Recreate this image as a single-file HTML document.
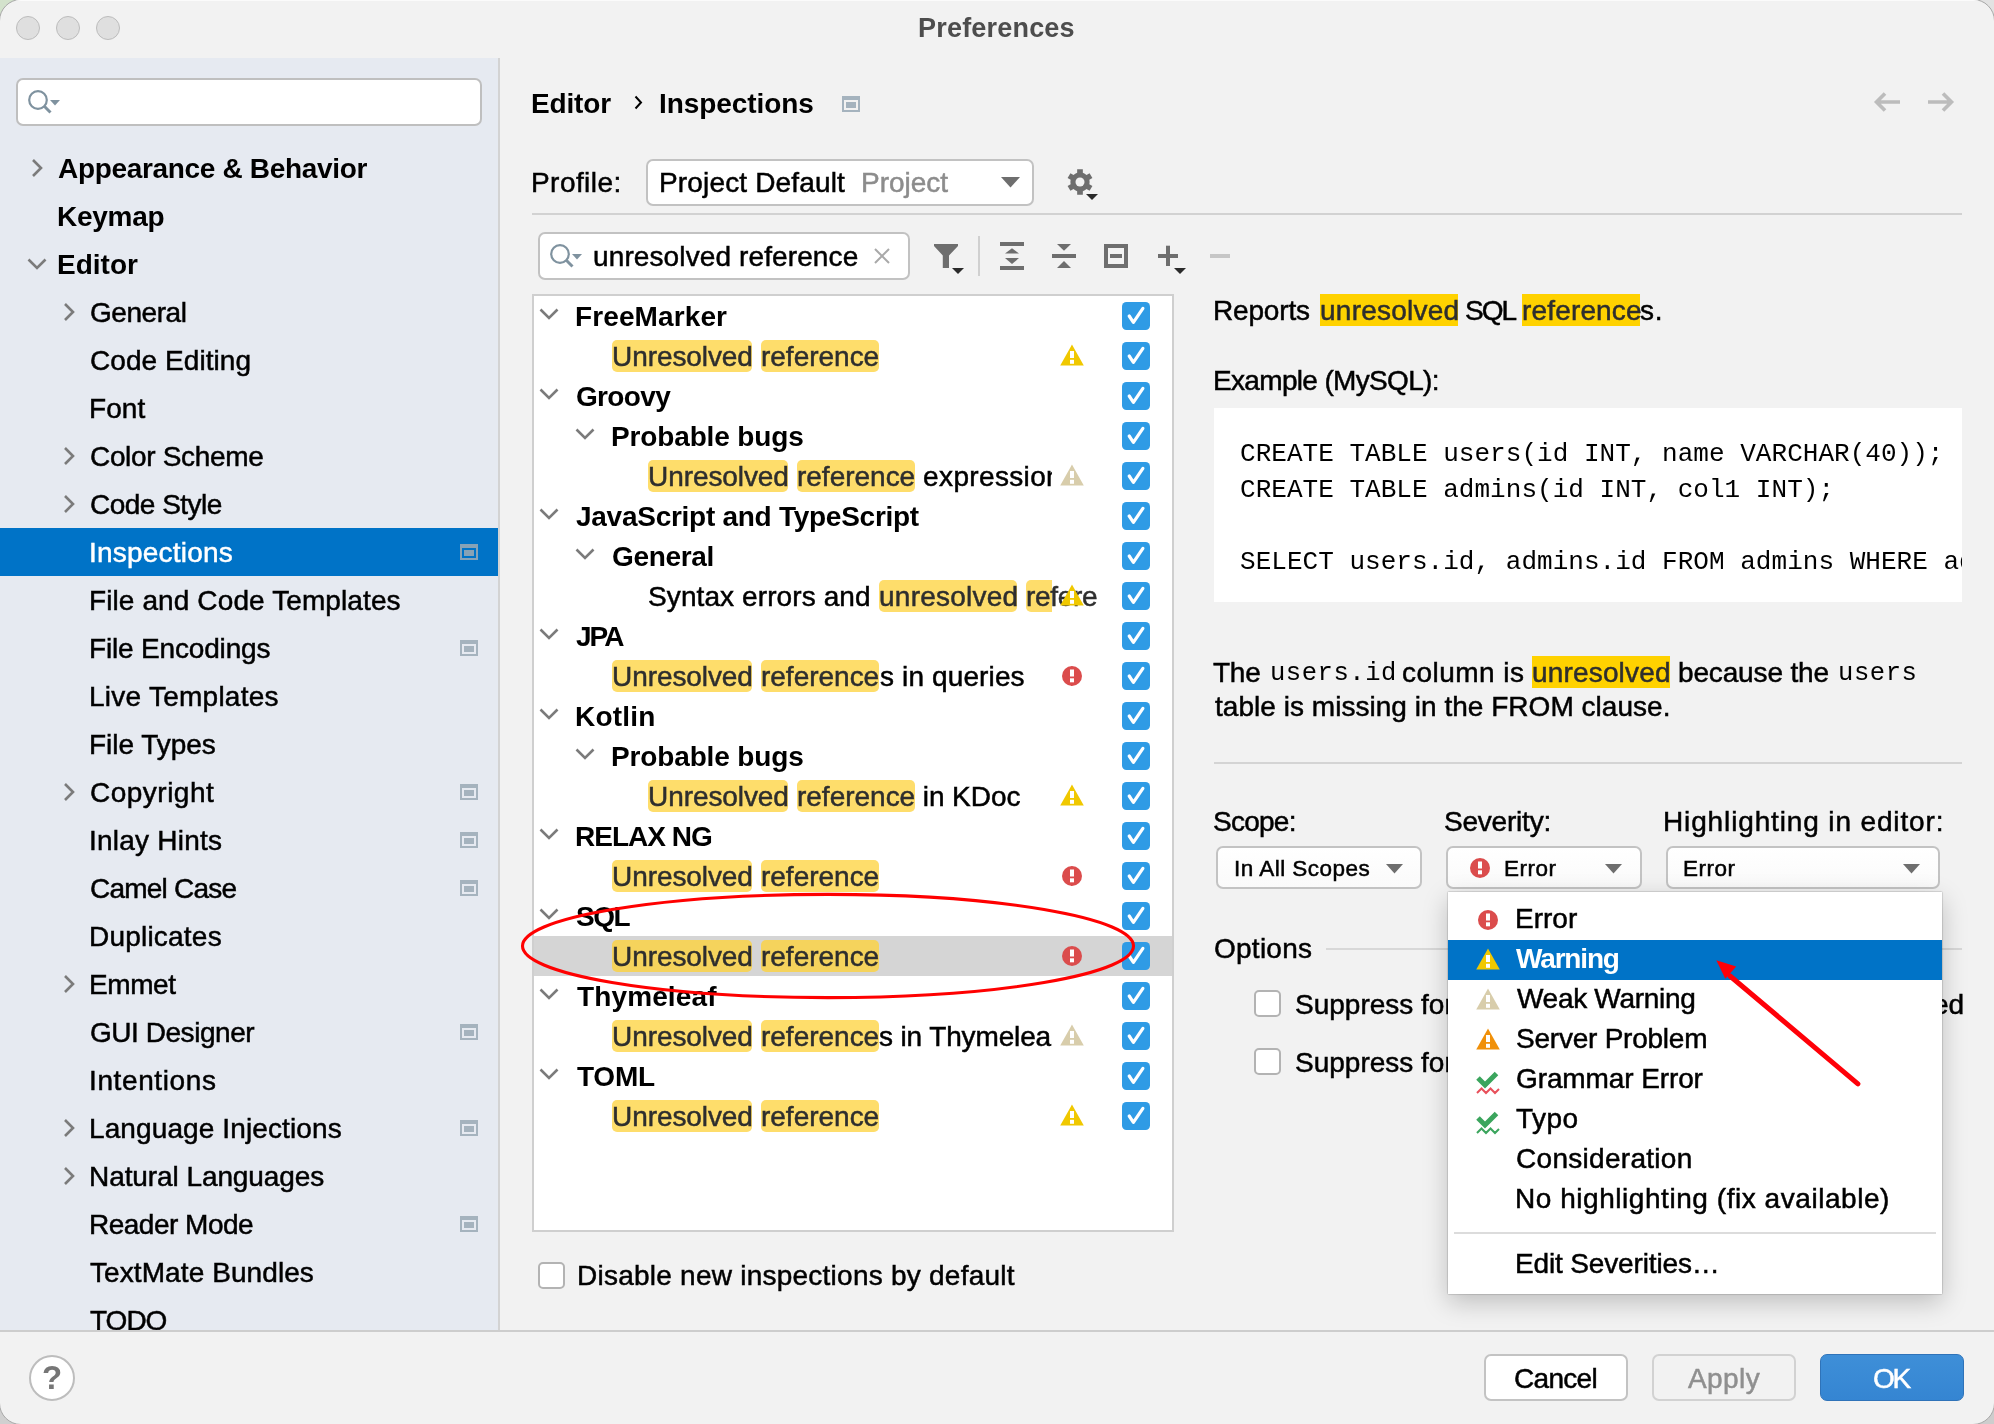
<!DOCTYPE html><html><head><meta charset="utf-8"><style>
html,body{margin:0;padding:0;}
body{width:1994px;height:1424px;position:relative;overflow:hidden;background:#9a9a9a;font-family:"Liberation Sans", sans-serif;}
.t{position:absolute;white-space:pre;will-change:transform;}
.b{position:absolute;}
.hl{background:#fedd6b;border-radius:5px;color:#2e2e2e;padding-top:1px;}
.hls{background:#f5d35c;border-radius:5px;color:#2e2e2e;padding-top:1px;}
.dhl{background:#ffd200;color:#2e2e2e;}
</style></head><body>
<div class="b" style="left:0px;top:0px;width:60px;height:60px;background:#d3e2cc;"></div>
<div class="b" style="left:1934px;top:0px;width:60px;height:60px;background:#e2e2e2;"></div>
<div class="b" style="left:0px;top:1364px;width:60px;height:60px;background:#d0d0d0;"></div>
<div class="b" style="left:1934px;top:1364px;width:60px;height:60px;background:#cdcdcd;"></div>
<div class="b" style="left:-1px;top:-1px;width:1994px;height:1424px;border:1px solid #a8a8a8;border-radius:22px;overflow:hidden;background:#f2f2f2;"><div class="b" style="left:0;top:0;width:1994px;height:1424px;">
<div class="b" style="left:0px;top:0px;width:1994px;height:1px;background:#fbfbfb;"></div>
<div class="b" style="left:0px;top:58px;width:498px;height:1273px;background:#e6eaf1;"></div>
<div class="b" style="left:498px;top:58px;width:2px;height:1273px;background:#d3d3d3;"></div>
<div class="b" style="left:0px;top:1330px;width:1994px;height:2px;background:#cdcdcd;"></div>
<div class="t" style="left:917.70px;top:7.84px;font-size:27px;line-height:40px;font-weight:700;color:#4d4d4d;font-family:'Liberation Sans', sans-serif;letter-spacing:0.200px;-webkit-text-stroke:0.0px #4d4d4d;">Preferences</div>
<div class="b" style="left:16px;top:16px;width:24px;height:24px;box-sizing:border-box;border-radius:50%;background:#dfdfdf;border:1px solid #bcbcbc;"></div>
<div class="b" style="left:56px;top:16px;width:24px;height:24px;box-sizing:border-box;border-radius:50%;background:#dfdfdf;border:1px solid #bcbcbc;"></div>
<div class="b" style="left:96px;top:16px;width:24px;height:24px;box-sizing:border-box;border-radius:50%;background:#dfdfdf;border:1px solid #bcbcbc;"></div>
<div class="b" style="left:16px;top:78px;width:466px;height:48px;box-sizing:border-box;border:2px solid #bfbfbf;border-radius:7px;background:#fff;"></div>
<svg class="b" style="left:26px;top:88px;" width="36" height="28" viewBox="0 0 36 28"><circle cx="12" cy="12" r="8.8" fill="none" stroke="#7f929f" stroke-width="2.2"/><path d="M18.3 18.3 L24.5 24.5" stroke="#7f929f" stroke-width="3"/><path d="M24 12 L34 12 L29 17.6 Z" fill="#7f929f"/></svg>
<div class="b" style="left:0;top:58px;width:498px;height:1272px;overflow:hidden;">
<svg class="b" style="left:30.5px;top:100px;" width="14" height="20" viewBox="0 0 14 20"><path d="M2 2 L10 10 L2 18" fill="none" stroke="#7b7b7b" stroke-width="2.6"/></svg>
<div class="t" style="left:57.50px;top:87.29px;font-size:28px;line-height:48px;font-weight:700;color:#000;font-family:'Liberation Sans', sans-serif;letter-spacing:-0.325px;-webkit-text-stroke:0.0px #000;">Appearance &amp; Behavior</div>
<div class="t" style="left:56.50px;top:135.29px;font-size:28px;line-height:48px;font-weight:700;color:#000;font-family:'Liberation Sans', sans-serif;letter-spacing:-0.280px;-webkit-text-stroke:0.0px #000;">Keymap</div>
<svg class="b" style="left:27.0px;top:200px;" width="20" height="12" viewBox="0 0 20 12"><path d="M1.5 1.5 L10 10 L18.5 1.5" fill="none" stroke="#7b7b7b" stroke-width="2.6"/></svg>
<div class="t" style="left:56.50px;top:183.29px;font-size:28px;line-height:48px;font-weight:700;color:#000;font-family:'Liberation Sans', sans-serif;letter-spacing:0.000px;-webkit-text-stroke:0.0px #000;">Editor</div>
<svg class="b" style="left:62.8px;top:244px;" width="14" height="20" viewBox="0 0 14 20"><path d="M2 2 L10 10 L2 18" fill="none" stroke="#7b7b7b" stroke-width="2.6"/></svg>
<div class="t" style="left:89.80px;top:231.29px;font-size:28px;line-height:48px;font-weight:400;color:#000;font-family:'Liberation Sans', sans-serif;letter-spacing:-0.450px;-webkit-text-stroke:0.5px #000;">General</div>
<div class="t" style="left:89.80px;top:279.29px;font-size:28px;line-height:48px;font-weight:400;color:#000;font-family:'Liberation Sans', sans-serif;letter-spacing:0.064px;-webkit-text-stroke:0.5px #000;">Code Editing</div>
<div class="t" style="left:88.80px;top:327.29px;font-size:28px;line-height:48px;font-weight:400;color:#000;font-family:'Liberation Sans', sans-serif;letter-spacing:0.067px;-webkit-text-stroke:0.5px #000;">Font</div>
<svg class="b" style="left:62.8px;top:388px;" width="14" height="20" viewBox="0 0 14 20"><path d="M2 2 L10 10 L2 18" fill="none" stroke="#7b7b7b" stroke-width="2.6"/></svg>
<div class="t" style="left:89.80px;top:375.29px;font-size:28px;line-height:48px;font-weight:400;color:#000;font-family:'Liberation Sans', sans-serif;letter-spacing:-0.336px;-webkit-text-stroke:0.5px #000;">Color Scheme</div>
<svg class="b" style="left:62.8px;top:436px;" width="14" height="20" viewBox="0 0 14 20"><path d="M2 2 L10 10 L2 18" fill="none" stroke="#7b7b7b" stroke-width="2.6"/></svg>
<div class="t" style="left:89.80px;top:423.29px;font-size:28px;line-height:48px;font-weight:400;color:#000;font-family:'Liberation Sans', sans-serif;letter-spacing:-0.511px;-webkit-text-stroke:0.5px #000;">Code Style</div>
<div class="b" style="left:0px;top:470px;width:498px;height:48px;background:#0073c7;"></div>
<div class="t" style="left:88.80px;top:471.29px;font-size:28px;line-height:48px;font-weight:400;color:#fff;font-family:'Liberation Sans', sans-serif;letter-spacing:0.220px;-webkit-text-stroke:0.5px #fff;">Inspections</div>
<svg class="b" style="left:460px;top:486px;" width="18" height="16" viewBox="0 0 18 16"><rect x="1" y="1" width="16" height="14" fill="none" stroke="#87a2b6" stroke-width="2"/><rect x="0" y="0" width="18" height="4" fill="#87a2b6"/><rect x="4" y="6" width="10" height="6" fill="#87a2b6"/></svg>
<div class="t" style="left:88.80px;top:519.29px;font-size:28px;line-height:48px;font-weight:400;color:#000;font-family:'Liberation Sans', sans-serif;letter-spacing:0.109px;-webkit-text-stroke:0.5px #000;">File and Code Templates</div>
<div class="t" style="left:88.80px;top:567.29px;font-size:28px;line-height:48px;font-weight:400;color:#000;font-family:'Liberation Sans', sans-serif;letter-spacing:-0.169px;-webkit-text-stroke:0.5px #000;">File Encodings</div>
<svg class="b" style="left:460px;top:582px;" width="18" height="16" viewBox="0 0 18 16"><rect x="1" y="1" width="16" height="14" fill="none" stroke="#a5b3be" stroke-width="2"/><rect x="0" y="0" width="18" height="4" fill="#a5b3be"/><rect x="4" y="6" width="10" height="6" fill="#a5b3be"/></svg>
<div class="t" style="left:88.80px;top:615.29px;font-size:28px;line-height:48px;font-weight:400;color:#000;font-family:'Liberation Sans', sans-serif;letter-spacing:0.254px;-webkit-text-stroke:0.5px #000;">Live Templates</div>
<div class="t" style="left:88.80px;top:663.29px;font-size:28px;line-height:48px;font-weight:400;color:#000;font-family:'Liberation Sans', sans-serif;letter-spacing:-0.044px;-webkit-text-stroke:0.5px #000;">File Types</div>
<svg class="b" style="left:62.8px;top:724px;" width="14" height="20" viewBox="0 0 14 20"><path d="M2 2 L10 10 L2 18" fill="none" stroke="#7b7b7b" stroke-width="2.6"/></svg>
<div class="t" style="left:89.80px;top:711.29px;font-size:28px;line-height:48px;font-weight:400;color:#000;font-family:'Liberation Sans', sans-serif;letter-spacing:0.488px;-webkit-text-stroke:0.5px #000;">Copyright</div>
<svg class="b" style="left:460px;top:726px;" width="18" height="16" viewBox="0 0 18 16"><rect x="1" y="1" width="16" height="14" fill="none" stroke="#a5b3be" stroke-width="2"/><rect x="0" y="0" width="18" height="4" fill="#a5b3be"/><rect x="4" y="6" width="10" height="6" fill="#a5b3be"/></svg>
<div class="t" style="left:88.80px;top:759.29px;font-size:28px;line-height:48px;font-weight:400;color:#000;font-family:'Liberation Sans', sans-serif;letter-spacing:0.240px;-webkit-text-stroke:0.5px #000;">Inlay Hints</div>
<svg class="b" style="left:460px;top:774px;" width="18" height="16" viewBox="0 0 18 16"><rect x="1" y="1" width="16" height="14" fill="none" stroke="#a5b3be" stroke-width="2"/><rect x="0" y="0" width="18" height="4" fill="#a5b3be"/><rect x="4" y="6" width="10" height="6" fill="#a5b3be"/></svg>
<div class="t" style="left:89.80px;top:807.29px;font-size:28px;line-height:48px;font-weight:400;color:#000;font-family:'Liberation Sans', sans-serif;letter-spacing:-0.789px;-webkit-text-stroke:0.5px #000;">Camel Case</div>
<svg class="b" style="left:460px;top:822px;" width="18" height="16" viewBox="0 0 18 16"><rect x="1" y="1" width="16" height="14" fill="none" stroke="#a5b3be" stroke-width="2"/><rect x="0" y="0" width="18" height="4" fill="#a5b3be"/><rect x="4" y="6" width="10" height="6" fill="#a5b3be"/></svg>
<div class="t" style="left:88.80px;top:855.29px;font-size:28px;line-height:48px;font-weight:400;color:#000;font-family:'Liberation Sans', sans-serif;letter-spacing:0.211px;-webkit-text-stroke:0.5px #000;">Duplicates</div>
<svg class="b" style="left:62.8px;top:916px;" width="14" height="20" viewBox="0 0 14 20"><path d="M2 2 L10 10 L2 18" fill="none" stroke="#7b7b7b" stroke-width="2.6"/></svg>
<div class="t" style="left:88.80px;top:903.29px;font-size:28px;line-height:48px;font-weight:400;color:#000;font-family:'Liberation Sans', sans-serif;letter-spacing:-0.400px;-webkit-text-stroke:0.5px #000;">Emmet</div>
<div class="t" style="left:89.80px;top:951.29px;font-size:28px;line-height:48px;font-weight:400;color:#000;font-family:'Liberation Sans', sans-serif;letter-spacing:-0.455px;-webkit-text-stroke:0.5px #000;">GUI Designer</div>
<svg class="b" style="left:460px;top:966px;" width="18" height="16" viewBox="0 0 18 16"><rect x="1" y="1" width="16" height="14" fill="none" stroke="#a5b3be" stroke-width="2"/><rect x="0" y="0" width="18" height="4" fill="#a5b3be"/><rect x="4" y="6" width="10" height="6" fill="#a5b3be"/></svg>
<div class="t" style="left:88.80px;top:999.29px;font-size:28px;line-height:48px;font-weight:400;color:#000;font-family:'Liberation Sans', sans-serif;letter-spacing:0.611px;-webkit-text-stroke:0.5px #000;">Intentions</div>
<svg class="b" style="left:62.8px;top:1060px;" width="14" height="20" viewBox="0 0 14 20"><path d="M2 2 L10 10 L2 18" fill="none" stroke="#7b7b7b" stroke-width="2.6"/></svg>
<div class="t" style="left:88.80px;top:1047.29px;font-size:28px;line-height:48px;font-weight:400;color:#000;font-family:'Liberation Sans', sans-serif;letter-spacing:0.111px;-webkit-text-stroke:0.5px #000;">Language Injections</div>
<svg class="b" style="left:460px;top:1062px;" width="18" height="16" viewBox="0 0 18 16"><rect x="1" y="1" width="16" height="14" fill="none" stroke="#a5b3be" stroke-width="2"/><rect x="0" y="0" width="18" height="4" fill="#a5b3be"/><rect x="4" y="6" width="10" height="6" fill="#a5b3be"/></svg>
<svg class="b" style="left:62.8px;top:1108px;" width="14" height="20" viewBox="0 0 14 20"><path d="M2 2 L10 10 L2 18" fill="none" stroke="#7b7b7b" stroke-width="2.6"/></svg>
<div class="t" style="left:88.80px;top:1095.29px;font-size:28px;line-height:48px;font-weight:400;color:#000;font-family:'Liberation Sans', sans-serif;letter-spacing:-0.081px;-webkit-text-stroke:0.5px #000;">Natural Languages</div>
<div class="t" style="left:88.80px;top:1143.29px;font-size:28px;line-height:48px;font-weight:400;color:#000;font-family:'Liberation Sans', sans-serif;letter-spacing:-0.500px;-webkit-text-stroke:0.5px #000;">Reader Mode</div>
<svg class="b" style="left:460px;top:1158px;" width="18" height="16" viewBox="0 0 18 16"><rect x="1" y="1" width="16" height="14" fill="none" stroke="#a5b3be" stroke-width="2"/><rect x="0" y="0" width="18" height="4" fill="#a5b3be"/><rect x="4" y="6" width="10" height="6" fill="#a5b3be"/></svg>
<div class="t" style="left:89.80px;top:1191.29px;font-size:28px;line-height:48px;font-weight:400;color:#000;font-family:'Liberation Sans', sans-serif;letter-spacing:0.087px;-webkit-text-stroke:0.5px #000;">TextMate Bundles</div>
<div class="t" style="left:89.80px;top:1239.29px;font-size:28px;line-height:48px;font-weight:400;color:#000;font-family:'Liberation Sans', sans-serif;letter-spacing:-1.000px;-webkit-text-stroke:0.5px #000;">TODO</div>
</div>
<div class="t" style="left:531.00px;top:83.69px;font-size:28px;line-height:40px;font-weight:700;color:#000;font-family:'Liberation Sans', sans-serif;letter-spacing:-0.160px;-webkit-text-stroke:0.0px #000;">Editor</div>
<svg class="b" style="left:633px;top:95px;" width="10" height="15" viewBox="0 0 10 15"><path d="M2.5 1.5 L8 7.5 L2.5 13.5" fill="none" stroke="#000" stroke-width="2"/></svg>
<div class="t" style="left:659.20px;top:83.69px;font-size:28px;line-height:40px;font-weight:700;color:#000;font-family:'Liberation Sans', sans-serif;letter-spacing:-0.080px;-webkit-text-stroke:0.0px #000;">Inspections</div>
<svg class="b" style="left:842px;top:96px;" width="18" height="16" viewBox="0 0 18 16"><rect x="1" y="1" width="16" height="14" fill="none" stroke="#a5b3be" stroke-width="2"/><rect x="0" y="0" width="18" height="4" fill="#a5b3be"/><rect x="4" y="6" width="10" height="6" fill="#a5b3be"/></svg>
<svg class="b" style="left:1873px;top:91px;" width="28" height="22" viewBox="0 0 28 22"><path d="M27 11 L3.5 11 M12 2.5 L3.5 11 L12 19.5" fill="none" stroke="#bcbcbc" stroke-width="3.6"/></svg>
<svg class="b" style="left:1927px;top:91px;" width="28" height="22" viewBox="0 0 28 22"><path d="M1 11 L24.5 11 M16 2.5 L24.5 11 L16 19.5" fill="none" stroke="#bcbcbc" stroke-width="3.6"/></svg>
<div class="t" style="left:530.60px;top:163.39px;font-size:28px;line-height:40px;font-weight:400;color:#000;font-family:'Liberation Sans', sans-serif;letter-spacing:0.443px;-webkit-text-stroke:0.5px #000;">Profile:</div>
<div class="b" style="left:646px;top:159px;width:388px;height:47px;box-sizing:border-box;border:2px solid #c2c2c2;border-radius:7px;background:#fff;"></div>
<div class="t" style="left:658.80px;top:163.39px;font-size:28px;line-height:40px;font-weight:400;color:#000;font-family:'Liberation Sans', sans-serif;letter-spacing:0.157px;-webkit-text-stroke:0.5px #000;">Project Default</div>
<div class="t" style="left:861.00px;top:163.39px;font-size:28px;line-height:40px;font-weight:400;color:#8c8c8c;font-family:'Liberation Sans', sans-serif;letter-spacing:0.000px;-webkit-text-stroke:0.5px #8c8c8c;">Project</div>
<svg class="b" style="left:1001px;top:177px;" width="20" height="11" viewBox="0 0 20 11"><path d="M0 0 L19 0 L9.5 10.5 Z" fill="#6e6e6e"/></svg>
<svg class="b" style="left:1060px;top:162px;" width="44" height="44" viewBox="0 0 44 44"><g transform="translate(-1060,-162)"><path d="M1089.36 184.13 L1092.41 185.89 L1089.57 190.80 L1086.52 189.04 L1086.52 189.04 L1084.80 190.31 L1082.84 191.17 L1082.84 191.17 L1082.84 194.69 L1077.16 194.69 L1077.16 191.17 L1077.16 191.17 L1075.20 190.31 L1073.48 189.04 L1073.48 189.04 L1070.43 190.80 L1067.59 185.89 L1070.64 184.13 L1070.64 184.13 L1070.40 182.00 L1070.64 179.87 L1070.64 179.87 L1067.59 178.11 L1070.43 173.20 L1073.48 174.96 L1073.48 174.96 L1075.20 173.69 L1077.16 172.83 L1077.16 172.83 L1077.16 169.31 L1082.84 169.31 L1082.84 172.83 L1082.84 172.83 L1084.80 173.69 L1086.52 174.96 L1086.52 174.96 L1089.57 173.20 L1092.41 178.11 L1089.36 179.87 L1089.36 179.87 L1089.60 182.00 L1089.36 184.13 Z" fill="#6e6e6e"/><circle cx="1080" cy="182" r="4.5" fill="#f2f2f2"/><path d="M1086 194 L1098 194 L1092 200 Z" fill="#2b2b2b"/></g></svg>
<div class="b" style="left:532px;top:213px;width:1430px;height:2px;background:#d2d2d2;"></div>
<div class="b" style="left:538px;top:232px;width:372px;height:48px;box-sizing:border-box;border:2px solid #c2c2c2;border-radius:7px;background:#fff;"></div>
<svg class="b" style="left:548px;top:242px;" width="36" height="28" viewBox="0 0 36 28"><circle cx="12" cy="12" r="8.8" fill="none" stroke="#7f929f" stroke-width="2.2"/><path d="M18.3 18.3 L24.5 24.5" stroke="#7f929f" stroke-width="3"/><path d="M24 12 L34 12 L29 17.6 Z" fill="#7f929f"/></svg>
<div class="t" style="left:593.20px;top:237.39px;font-size:28px;line-height:40px;font-weight:400;color:#000;font-family:'Liberation Sans', sans-serif;letter-spacing:0.116px;-webkit-text-stroke:0.5px #000;">unresolved reference</div>
<svg class="b" style="left:874px;top:248px;" width="16" height="16" viewBox="0 0 16 16"><path d="M1 1 L15 15 M15 1 L1 15" stroke="#a9a9a9" stroke-width="2"/></svg>
<svg class="b" style="left:930px;top:240px;" width="40" height="40" viewBox="0 0 40 40"><path d="M4 4 L28 4 L28 6 L19 15.6 L19 28 L12.8 28 L12.8 15.6 L4 6 Z" fill="#6e6e6e"/><path d="M22 28 L34 28 L28 34 Z" fill="#2b2b2b"/></svg>
<div class="b" style="left:978px;top:236px;width:2px;height:40px;background:#d0d0d0;"></div>
<svg class="b" style="left:996px;top:238px;" width="32" height="36" viewBox="0 0 32 36"><rect x="4" y="4" width="24" height="4" fill="#6e6e6e"/><rect x="4" y="28" width="24" height="4" fill="#6e6e6e"/><path d="M9 15.6 L16 10.2 L23 15.6 Z" fill="#6e6e6e"/><path d="M9 20.1 L16 25.9 L23 20.1 Z" fill="#6e6e6e"/></svg>
<svg class="b" style="left:1048px;top:238px;" width="32" height="36" viewBox="0 0 32 36"><rect x="4" y="16" width="24" height="4" fill="#6e6e6e"/><path d="M9 6 L23 6 L16 12.7 Z" fill="#6e6e6e"/><path d="M9 30 L23 30 L16 23 Z" fill="#6e6e6e"/></svg>
<svg class="b" style="left:1100px;top:240px;" width="32" height="32" viewBox="0 0 32 32"><rect x="6" y="6" width="20" height="20" fill="none" stroke="#6e6e6e" stroke-width="4"/><rect x="10" y="14" width="12" height="4" fill="#6e6e6e"/></svg>
<svg class="b" style="left:1154px;top:240px;" width="36" height="36" viewBox="0 0 36 36"><rect x="4" y="14" width="20" height="4" fill="#6e6e6e"/><rect x="12" y="5.7" width="4" height="20.3" fill="#6e6e6e"/><path d="M20 28 L32 28 L26 34 Z" fill="#2b2b2b"/></svg>
<div class="b" style="left:1210px;top:254px;width:20px;height:4px;background:#c6c6c6;"></div>
<div class="b" style="left:532px;top:294px;width:642px;height:938px;box-sizing:border-box;border:2px solid #cfcfcf;background:#fff;"></div>
<svg class="b" style="left:539.0px;top:308px;" width="20" height="12" viewBox="0 0 20 12"><path d="M1.5 1.5 L10 10 L18.5 1.5" fill="none" stroke="#7b7b7b" stroke-width="2.6"/></svg>
<div class="t" style="left:575.30px;top:297.29px;font-size:28px;line-height:40px;font-weight:700;color:#000;font-family:'Liberation Sans', sans-serif;letter-spacing:0.111px;-webkit-text-stroke:0.0px #000;">FreeMarker</div>
<svg class="b" style="left:1122px;top:302px;" width="28" height="28" viewBox="0 0 28 28"><rect x="0" y="0" width="28" height="28" rx="4.5" fill="#2f9be5"/><path d="M7.2 14 L11.4 20.3 L20.9 6.4" fill="none" stroke="#fff" stroke-width="3.2" stroke-linecap="round" stroke-linejoin="round"/></svg>
<div class="b" style="left:560px;top:336px;width:492px;height:40px;overflow:hidden;">
<div class="b" style="left:52.200000000000045px;top:4px;width:139.9px;height:32px;background:#fedd6b;border-radius:5px;"></div>
<div class="t" style="left:51.50px;top:1.29px;font-size:28px;line-height:40px;font-weight:400;color:#2e2e2e;font-family:'Liberation Sans', sans-serif;letter-spacing:-0.078px;-webkit-text-stroke:0.5px #2e2e2e;">Unresolved</div>
<div class="b" style="left:200.70000000000005px;top:4px;width:118.2px;height:32px;background:#fedd6b;border-radius:5px;"></div>
<div class="t" style="left:200.50px;top:1.29px;font-size:28px;line-height:40px;font-weight:400;color:#2e2e2e;font-family:'Liberation Sans', sans-serif;letter-spacing:-0.012px;-webkit-text-stroke:0.5px #2e2e2e;">reference</div>
</div>
<svg class="b" style="left:1060px;top:344px;" width="24" height="22" viewBox="0 0 24 22"><path d="M12 0.5 L23.8 21.5 L0.2 21.5 Z" fill="#f0c800"/><rect x="10" y="7" width="4" height="7" fill="#fff"/><rect x="10" y="15.8" width="4" height="4" fill="#fff"/></svg>
<svg class="b" style="left:1122px;top:342px;" width="28" height="28" viewBox="0 0 28 28"><rect x="0" y="0" width="28" height="28" rx="4.5" fill="#2f9be5"/><path d="M7.2 14 L11.4 20.3 L20.9 6.4" fill="none" stroke="#fff" stroke-width="3.2" stroke-linecap="round" stroke-linejoin="round"/></svg>
<svg class="b" style="left:539.0px;top:388px;" width="20" height="12" viewBox="0 0 20 12"><path d="M1.5 1.5 L10 10 L18.5 1.5" fill="none" stroke="#7b7b7b" stroke-width="2.6"/></svg>
<div class="t" style="left:576.30px;top:377.29px;font-size:28px;line-height:40px;font-weight:700;color:#000;font-family:'Liberation Sans', sans-serif;letter-spacing:-0.660px;-webkit-text-stroke:0.0px #000;">Groovy</div>
<svg class="b" style="left:1122px;top:382px;" width="28" height="28" viewBox="0 0 28 28"><rect x="0" y="0" width="28" height="28" rx="4.5" fill="#2f9be5"/><path d="M7.2 14 L11.4 20.3 L20.9 6.4" fill="none" stroke="#fff" stroke-width="3.2" stroke-linecap="round" stroke-linejoin="round"/></svg>
<svg class="b" style="left:575.0px;top:428px;" width="20" height="12" viewBox="0 0 20 12"><path d="M1.5 1.5 L10 10 L18.5 1.5" fill="none" stroke="#7b7b7b" stroke-width="2.6"/></svg>
<div class="t" style="left:611.30px;top:417.29px;font-size:28px;line-height:40px;font-weight:700;color:#000;font-family:'Liberation Sans', sans-serif;letter-spacing:-0.142px;-webkit-text-stroke:0.0px #000;">Probable bugs</div>
<svg class="b" style="left:1122px;top:422px;" width="28" height="28" viewBox="0 0 28 28"><rect x="0" y="0" width="28" height="28" rx="4.5" fill="#2f9be5"/><path d="M7.2 14 L11.4 20.3 L20.9 6.4" fill="none" stroke="#fff" stroke-width="3.2" stroke-linecap="round" stroke-linejoin="round"/></svg>
<div class="b" style="left:560px;top:456px;width:492px;height:40px;overflow:hidden;">
<div class="b" style="left:88.20000000000005px;top:4px;width:139.9px;height:32px;background:#fedd6b;border-radius:5px;"></div>
<div class="t" style="left:87.50px;top:1.29px;font-size:28px;line-height:40px;font-weight:400;color:#2e2e2e;font-family:'Liberation Sans', sans-serif;letter-spacing:-0.078px;-webkit-text-stroke:0.5px #2e2e2e;">Unresolved</div>
<div class="b" style="left:236.70000000000005px;top:4px;width:118.2px;height:32px;background:#fedd6b;border-radius:5px;"></div>
<div class="t" style="left:236.50px;top:1.29px;font-size:28px;line-height:40px;font-weight:400;color:#2e2e2e;font-family:'Liberation Sans', sans-serif;letter-spacing:-0.012px;-webkit-text-stroke:0.5px #2e2e2e;">reference</div>
<div class="t" style="left:355.30px;top:1.29px;font-size:28px;line-height:40px;font-weight:400;color:#000;font-family:'Liberation Sans', sans-serif;letter-spacing:0.344px;-webkit-text-stroke:0.5px #000;"> expression</div>
</div>
<svg class="b" style="left:1060px;top:464px;" width="24" height="22" viewBox="0 0 24 22"><path d="M12 0.5 L23.8 21.5 L0.2 21.5 Z" fill="#d8cdab"/><rect x="10" y="7" width="4" height="7" fill="#fff"/><rect x="10" y="15.8" width="4" height="4" fill="#fff"/></svg>
<svg class="b" style="left:1122px;top:462px;" width="28" height="28" viewBox="0 0 28 28"><rect x="0" y="0" width="28" height="28" rx="4.5" fill="#2f9be5"/><path d="M7.2 14 L11.4 20.3 L20.9 6.4" fill="none" stroke="#fff" stroke-width="3.2" stroke-linecap="round" stroke-linejoin="round"/></svg>
<svg class="b" style="left:539.0px;top:508px;" width="20" height="12" viewBox="0 0 20 12"><path d="M1.5 1.5 L10 10 L18.5 1.5" fill="none" stroke="#7b7b7b" stroke-width="2.6"/></svg>
<div class="t" style="left:576.30px;top:497.29px;font-size:28px;line-height:40px;font-weight:700;color:#000;font-family:'Liberation Sans', sans-serif;letter-spacing:-0.267px;-webkit-text-stroke:0.0px #000;">JavaScript and TypeScript</div>
<svg class="b" style="left:1122px;top:502px;" width="28" height="28" viewBox="0 0 28 28"><rect x="0" y="0" width="28" height="28" rx="4.5" fill="#2f9be5"/><path d="M7.2 14 L11.4 20.3 L20.9 6.4" fill="none" stroke="#fff" stroke-width="3.2" stroke-linecap="round" stroke-linejoin="round"/></svg>
<svg class="b" style="left:575.0px;top:548px;" width="20" height="12" viewBox="0 0 20 12"><path d="M1.5 1.5 L10 10 L18.5 1.5" fill="none" stroke="#7b7b7b" stroke-width="2.6"/></svg>
<div class="t" style="left:612.30px;top:537.29px;font-size:28px;line-height:40px;font-weight:700;color:#000;font-family:'Liberation Sans', sans-serif;letter-spacing:-0.333px;-webkit-text-stroke:0.0px #000;">General</div>
<svg class="b" style="left:1122px;top:542px;" width="28" height="28" viewBox="0 0 28 28"><rect x="0" y="0" width="28" height="28" rx="4.5" fill="#2f9be5"/><path d="M7.2 14 L11.4 20.3 L20.9 6.4" fill="none" stroke="#fff" stroke-width="3.2" stroke-linecap="round" stroke-linejoin="round"/></svg>
<div class="b" style="left:600px;top:576px;width:497px;height:40px;overflow:hidden;">
<div class="t" style="left:48.00px;top:1.29px;font-size:28px;line-height:40px;font-weight:400;color:#000;font-family:'Liberation Sans', sans-serif;letter-spacing:0.100px;-webkit-text-stroke:0.5px #000;">Syntax errors and</div>
<div class="b" style="left:279.20000000000005px;top:4px;width:137.8px;height:32px;background:#fedd6b;border-radius:5px;"></div>
<div class="t" style="left:278.50px;top:1.29px;font-size:28px;line-height:40px;font-weight:400;color:#2e2e2e;font-family:'Liberation Sans', sans-serif;letter-spacing:0.244px;-webkit-text-stroke:0.5px #2e2e2e;">unresolved</div>
<div class="b" style="left:425.79999999999995px;top:4px;width:26.200000000000045px;height:32px;background:#fedd6b;border-radius:5px 0 0 5px;"></div>
<div class="t" style="left:425.50px;top:1.29px;font-size:28px;line-height:40px;font-weight:400;color:#2e2e2e;font-family:'Liberation Sans', sans-serif;letter-spacing:-0.300px;-webkit-text-stroke:0.5px #2e2e2e;">references</div>
</div>
<svg class="b" style="left:1060px;top:584px;" width="24" height="22" viewBox="0 0 24 22"><path d="M12 0.5 L23.8 21.5 L0.2 21.5 Z" fill="#f0c800"/><rect x="10" y="7" width="4" height="7" fill="#fff"/><rect x="10" y="15.8" width="4" height="4" fill="#fff"/></svg>
<svg class="b" style="left:1122px;top:582px;" width="28" height="28" viewBox="0 0 28 28"><rect x="0" y="0" width="28" height="28" rx="4.5" fill="#2f9be5"/><path d="M7.2 14 L11.4 20.3 L20.9 6.4" fill="none" stroke="#fff" stroke-width="3.2" stroke-linecap="round" stroke-linejoin="round"/></svg>
<svg class="b" style="left:539.0px;top:628px;" width="20" height="12" viewBox="0 0 20 12"><path d="M1.5 1.5 L10 10 L18.5 1.5" fill="none" stroke="#7b7b7b" stroke-width="2.6"/></svg>
<div class="t" style="left:576.30px;top:617.29px;font-size:28px;line-height:40px;font-weight:700;color:#000;font-family:'Liberation Sans', sans-serif;letter-spacing:-2.000px;-webkit-text-stroke:0.0px #000;">JPA</div>
<svg class="b" style="left:1122px;top:622px;" width="28" height="28" viewBox="0 0 28 28"><rect x="0" y="0" width="28" height="28" rx="4.5" fill="#2f9be5"/><path d="M7.2 14 L11.4 20.3 L20.9 6.4" fill="none" stroke="#fff" stroke-width="3.2" stroke-linecap="round" stroke-linejoin="round"/></svg>
<div class="b" style="left:560px;top:656px;width:492px;height:40px;overflow:hidden;">
<div class="b" style="left:52.200000000000045px;top:4px;width:139.9px;height:32px;background:#fedd6b;border-radius:5px;"></div>
<div class="t" style="left:51.50px;top:1.29px;font-size:28px;line-height:40px;font-weight:400;color:#2e2e2e;font-family:'Liberation Sans', sans-serif;letter-spacing:-0.078px;-webkit-text-stroke:0.5px #2e2e2e;">Unresolved</div>
<div class="b" style="left:200.70000000000005px;top:4px;width:118.2px;height:32px;background:#fedd6b;border-radius:5px;"></div>
<div class="t" style="left:200.50px;top:1.29px;font-size:28px;line-height:40px;font-weight:400;color:#2e2e2e;font-family:'Liberation Sans', sans-serif;letter-spacing:-0.012px;-webkit-text-stroke:0.5px #2e2e2e;">reference</div>
<div class="t" style="left:319.60px;top:1.29px;font-size:28px;line-height:40px;font-weight:400;color:#000;font-family:'Liberation Sans', sans-serif;letter-spacing:0.127px;-webkit-text-stroke:0.5px #000;">s in queries</div>
</div>
<svg class="b" style="left:1062px;top:666px;" width="20" height="20" viewBox="0 0 20 20"><circle cx="10" cy="10" r="10" fill="#db4c4c"/><rect x="8" y="3.5" width="4" height="7" fill="#fff"/><rect x="8" y="12.3" width="4" height="4" fill="#fff"/></svg>
<svg class="b" style="left:1122px;top:662px;" width="28" height="28" viewBox="0 0 28 28"><rect x="0" y="0" width="28" height="28" rx="4.5" fill="#2f9be5"/><path d="M7.2 14 L11.4 20.3 L20.9 6.4" fill="none" stroke="#fff" stroke-width="3.2" stroke-linecap="round" stroke-linejoin="round"/></svg>
<svg class="b" style="left:539.0px;top:708px;" width="20" height="12" viewBox="0 0 20 12"><path d="M1.5 1.5 L10 10 L18.5 1.5" fill="none" stroke="#7b7b7b" stroke-width="2.6"/></svg>
<div class="t" style="left:575.30px;top:697.29px;font-size:28px;line-height:40px;font-weight:700;color:#000;font-family:'Liberation Sans', sans-serif;letter-spacing:0.200px;-webkit-text-stroke:0.0px #000;">Kotlin</div>
<svg class="b" style="left:1122px;top:702px;" width="28" height="28" viewBox="0 0 28 28"><rect x="0" y="0" width="28" height="28" rx="4.5" fill="#2f9be5"/><path d="M7.2 14 L11.4 20.3 L20.9 6.4" fill="none" stroke="#fff" stroke-width="3.2" stroke-linecap="round" stroke-linejoin="round"/></svg>
<svg class="b" style="left:575.0px;top:748px;" width="20" height="12" viewBox="0 0 20 12"><path d="M1.5 1.5 L10 10 L18.5 1.5" fill="none" stroke="#7b7b7b" stroke-width="2.6"/></svg>
<div class="t" style="left:611.30px;top:737.29px;font-size:28px;line-height:40px;font-weight:700;color:#000;font-family:'Liberation Sans', sans-serif;letter-spacing:-0.142px;-webkit-text-stroke:0.0px #000;">Probable bugs</div>
<svg class="b" style="left:1122px;top:742px;" width="28" height="28" viewBox="0 0 28 28"><rect x="0" y="0" width="28" height="28" rx="4.5" fill="#2f9be5"/><path d="M7.2 14 L11.4 20.3 L20.9 6.4" fill="none" stroke="#fff" stroke-width="3.2" stroke-linecap="round" stroke-linejoin="round"/></svg>
<div class="b" style="left:560px;top:776px;width:492px;height:40px;overflow:hidden;">
<div class="b" style="left:88.20000000000005px;top:4px;width:139.9px;height:32px;background:#fedd6b;border-radius:5px;"></div>
<div class="t" style="left:87.50px;top:1.29px;font-size:28px;line-height:40px;font-weight:400;color:#2e2e2e;font-family:'Liberation Sans', sans-serif;letter-spacing:-0.078px;-webkit-text-stroke:0.5px #2e2e2e;">Unresolved</div>
<div class="b" style="left:236.70000000000005px;top:4px;width:118.2px;height:32px;background:#fedd6b;border-radius:5px;"></div>
<div class="t" style="left:236.50px;top:1.29px;font-size:28px;line-height:40px;font-weight:400;color:#2e2e2e;font-family:'Liberation Sans', sans-serif;letter-spacing:-0.012px;-webkit-text-stroke:0.5px #2e2e2e;">reference</div>
<div class="t" style="left:355.00px;top:1.29px;font-size:28px;line-height:40px;font-weight:400;color:#000;font-family:'Liberation Sans', sans-serif;letter-spacing:-0.057px;-webkit-text-stroke:0.5px #000;"> in KDoc</div>
</div>
<svg class="b" style="left:1060px;top:784px;" width="24" height="22" viewBox="0 0 24 22"><path d="M12 0.5 L23.8 21.5 L0.2 21.5 Z" fill="#f0c800"/><rect x="10" y="7" width="4" height="7" fill="#fff"/><rect x="10" y="15.8" width="4" height="4" fill="#fff"/></svg>
<svg class="b" style="left:1122px;top:782px;" width="28" height="28" viewBox="0 0 28 28"><rect x="0" y="0" width="28" height="28" rx="4.5" fill="#2f9be5"/><path d="M7.2 14 L11.4 20.3 L20.9 6.4" fill="none" stroke="#fff" stroke-width="3.2" stroke-linecap="round" stroke-linejoin="round"/></svg>
<svg class="b" style="left:539.0px;top:828px;" width="20" height="12" viewBox="0 0 20 12"><path d="M1.5 1.5 L10 10 L18.5 1.5" fill="none" stroke="#7b7b7b" stroke-width="2.6"/></svg>
<div class="t" style="left:575.30px;top:817.29px;font-size:28px;line-height:40px;font-weight:700;color:#000;font-family:'Liberation Sans', sans-serif;letter-spacing:-1.000px;-webkit-text-stroke:0.0px #000;">RELAX NG</div>
<svg class="b" style="left:1122px;top:822px;" width="28" height="28" viewBox="0 0 28 28"><rect x="0" y="0" width="28" height="28" rx="4.5" fill="#2f9be5"/><path d="M7.2 14 L11.4 20.3 L20.9 6.4" fill="none" stroke="#fff" stroke-width="3.2" stroke-linecap="round" stroke-linejoin="round"/></svg>
<div class="b" style="left:560px;top:856px;width:492px;height:40px;overflow:hidden;">
<div class="b" style="left:52.200000000000045px;top:4px;width:139.9px;height:32px;background:#fedd6b;border-radius:5px;"></div>
<div class="t" style="left:51.50px;top:1.29px;font-size:28px;line-height:40px;font-weight:400;color:#2e2e2e;font-family:'Liberation Sans', sans-serif;letter-spacing:-0.078px;-webkit-text-stroke:0.5px #2e2e2e;">Unresolved</div>
<div class="b" style="left:200.70000000000005px;top:4px;width:118.2px;height:32px;background:#fedd6b;border-radius:5px;"></div>
<div class="t" style="left:200.50px;top:1.29px;font-size:28px;line-height:40px;font-weight:400;color:#2e2e2e;font-family:'Liberation Sans', sans-serif;letter-spacing:-0.012px;-webkit-text-stroke:0.5px #2e2e2e;">reference</div>
</div>
<svg class="b" style="left:1062px;top:866px;" width="20" height="20" viewBox="0 0 20 20"><circle cx="10" cy="10" r="10" fill="#db4c4c"/><rect x="8" y="3.5" width="4" height="7" fill="#fff"/><rect x="8" y="12.3" width="4" height="4" fill="#fff"/></svg>
<svg class="b" style="left:1122px;top:862px;" width="28" height="28" viewBox="0 0 28 28"><rect x="0" y="0" width="28" height="28" rx="4.5" fill="#2f9be5"/><path d="M7.2 14 L11.4 20.3 L20.9 6.4" fill="none" stroke="#fff" stroke-width="3.2" stroke-linecap="round" stroke-linejoin="round"/></svg>
<svg class="b" style="left:539.0px;top:908px;" width="20" height="12" viewBox="0 0 20 12"><path d="M1.5 1.5 L10 10 L18.5 1.5" fill="none" stroke="#7b7b7b" stroke-width="2.6"/></svg>
<div class="t" style="left:576.30px;top:897.29px;font-size:28px;line-height:40px;font-weight:700;color:#000;font-family:'Liberation Sans', sans-serif;letter-spacing:-1.500px;-webkit-text-stroke:0.0px #000;">SQL</div>
<svg class="b" style="left:1122px;top:902px;" width="28" height="28" viewBox="0 0 28 28"><rect x="0" y="0" width="28" height="28" rx="4.5" fill="#2f9be5"/><path d="M7.2 14 L11.4 20.3 L20.9 6.4" fill="none" stroke="#fff" stroke-width="3.2" stroke-linecap="round" stroke-linejoin="round"/></svg>
<div class="b" style="left:534px;top:936px;width:638px;height:40px;background:#d5d5d5;"></div>
<div class="b" style="left:560px;top:936px;width:492px;height:40px;overflow:hidden;">
<div class="b" style="left:52.200000000000045px;top:4px;width:139.9px;height:32px;background:#f5d35c;border-radius:5px;"></div>
<div class="t" style="left:51.50px;top:1.29px;font-size:28px;line-height:40px;font-weight:400;color:#2e2e2e;font-family:'Liberation Sans', sans-serif;letter-spacing:-0.078px;-webkit-text-stroke:0.5px #2e2e2e;">Unresolved</div>
<div class="b" style="left:200.70000000000005px;top:4px;width:118.2px;height:32px;background:#f5d35c;border-radius:5px;"></div>
<div class="t" style="left:200.50px;top:1.29px;font-size:28px;line-height:40px;font-weight:400;color:#2e2e2e;font-family:'Liberation Sans', sans-serif;letter-spacing:-0.012px;-webkit-text-stroke:0.5px #2e2e2e;">reference</div>
</div>
<svg class="b" style="left:1062px;top:946px;" width="20" height="20" viewBox="0 0 20 20"><circle cx="10" cy="10" r="10" fill="#db4c4c"/><rect x="8" y="3.5" width="4" height="7" fill="#fff"/><rect x="8" y="12.3" width="4" height="4" fill="#fff"/></svg>
<svg class="b" style="left:1122px;top:942px;" width="28" height="28" viewBox="0 0 28 28"><rect x="0" y="0" width="28" height="28" rx="4.5" fill="#2f9be5"/><path d="M7.2 14 L11.4 20.3 L20.9 6.4" fill="none" stroke="#fff" stroke-width="3.2" stroke-linecap="round" stroke-linejoin="round"/></svg>
<svg class="b" style="left:539.0px;top:988px;" width="20" height="12" viewBox="0 0 20 12"><path d="M1.5 1.5 L10 10 L18.5 1.5" fill="none" stroke="#7b7b7b" stroke-width="2.6"/></svg>
<div class="t" style="left:577.30px;top:977.29px;font-size:28px;line-height:40px;font-weight:700;color:#000;font-family:'Liberation Sans', sans-serif;letter-spacing:0.125px;-webkit-text-stroke:0.0px #000;">Thymeleaf</div>
<svg class="b" style="left:1122px;top:982px;" width="28" height="28" viewBox="0 0 28 28"><rect x="0" y="0" width="28" height="28" rx="4.5" fill="#2f9be5"/><path d="M7.2 14 L11.4 20.3 L20.9 6.4" fill="none" stroke="#fff" stroke-width="3.2" stroke-linecap="round" stroke-linejoin="round"/></svg>
<div class="b" style="left:560px;top:1016px;width:492px;height:40px;overflow:hidden;">
<div class="b" style="left:52.200000000000045px;top:4px;width:139.9px;height:32px;background:#fedd6b;border-radius:5px;"></div>
<div class="t" style="left:51.50px;top:1.29px;font-size:28px;line-height:40px;font-weight:400;color:#2e2e2e;font-family:'Liberation Sans', sans-serif;letter-spacing:-0.078px;-webkit-text-stroke:0.5px #2e2e2e;">Unresolved</div>
<div class="b" style="left:200.70000000000005px;top:4px;width:118.2px;height:32px;background:#fedd6b;border-radius:5px;"></div>
<div class="t" style="left:200.50px;top:1.29px;font-size:28px;line-height:40px;font-weight:400;color:#2e2e2e;font-family:'Liberation Sans', sans-serif;letter-spacing:-0.012px;-webkit-text-stroke:0.5px #2e2e2e;">reference</div>
<div class="t" style="left:319.20px;top:1.29px;font-size:28px;line-height:40px;font-weight:400;color:#000;font-family:'Liberation Sans', sans-serif;letter-spacing:-0.133px;-webkit-text-stroke:0.5px #000;">s in Thymelea</div>
</div>
<svg class="b" style="left:1060px;top:1024px;" width="24" height="22" viewBox="0 0 24 22"><path d="M12 0.5 L23.8 21.5 L0.2 21.5 Z" fill="#d8cdab"/><rect x="10" y="7" width="4" height="7" fill="#fff"/><rect x="10" y="15.8" width="4" height="4" fill="#fff"/></svg>
<svg class="b" style="left:1122px;top:1022px;" width="28" height="28" viewBox="0 0 28 28"><rect x="0" y="0" width="28" height="28" rx="4.5" fill="#2f9be5"/><path d="M7.2 14 L11.4 20.3 L20.9 6.4" fill="none" stroke="#fff" stroke-width="3.2" stroke-linecap="round" stroke-linejoin="round"/></svg>
<svg class="b" style="left:539.0px;top:1068px;" width="20" height="12" viewBox="0 0 20 12"><path d="M1.5 1.5 L10 10 L18.5 1.5" fill="none" stroke="#7b7b7b" stroke-width="2.6"/></svg>
<div class="t" style="left:577.30px;top:1057.29px;font-size:28px;line-height:40px;font-weight:700;color:#000;font-family:'Liberation Sans', sans-serif;letter-spacing:-0.233px;-webkit-text-stroke:0.0px #000;">TOML</div>
<svg class="b" style="left:1122px;top:1062px;" width="28" height="28" viewBox="0 0 28 28"><rect x="0" y="0" width="28" height="28" rx="4.5" fill="#2f9be5"/><path d="M7.2 14 L11.4 20.3 L20.9 6.4" fill="none" stroke="#fff" stroke-width="3.2" stroke-linecap="round" stroke-linejoin="round"/></svg>
<div class="b" style="left:560px;top:1096px;width:492px;height:40px;overflow:hidden;">
<div class="b" style="left:52.200000000000045px;top:4px;width:139.9px;height:32px;background:#fedd6b;border-radius:5px;"></div>
<div class="t" style="left:51.50px;top:1.29px;font-size:28px;line-height:40px;font-weight:400;color:#2e2e2e;font-family:'Liberation Sans', sans-serif;letter-spacing:-0.078px;-webkit-text-stroke:0.5px #2e2e2e;">Unresolved</div>
<div class="b" style="left:200.70000000000005px;top:4px;width:118.2px;height:32px;background:#fedd6b;border-radius:5px;"></div>
<div class="t" style="left:200.50px;top:1.29px;font-size:28px;line-height:40px;font-weight:400;color:#2e2e2e;font-family:'Liberation Sans', sans-serif;letter-spacing:-0.012px;-webkit-text-stroke:0.5px #2e2e2e;">reference</div>
</div>
<svg class="b" style="left:1060px;top:1104px;" width="24" height="22" viewBox="0 0 24 22"><path d="M12 0.5 L23.8 21.5 L0.2 21.5 Z" fill="#f0c800"/><rect x="10" y="7" width="4" height="7" fill="#fff"/><rect x="10" y="15.8" width="4" height="4" fill="#fff"/></svg>
<svg class="b" style="left:1122px;top:1102px;" width="28" height="28" viewBox="0 0 28 28"><rect x="0" y="0" width="28" height="28" rx="4.5" fill="#2f9be5"/><path d="M7.2 14 L11.4 20.3 L20.9 6.4" fill="none" stroke="#fff" stroke-width="3.2" stroke-linecap="round" stroke-linejoin="round"/></svg>
<svg class="b" style="left:0px;top:0px;" width="1994" height="1424" viewBox="0 0 1994 1424"><ellipse cx="828" cy="946" rx="305.5" ry="51.6" fill="none" stroke="#ff0000" stroke-width="3.1"/></svg>
<div class="b" style="left:538px;top:1262px;width:27px;height:27px;box-sizing:border-box;border:2px solid #b3b3b3;border-radius:5px;background:#fff;"></div>
<div class="t" style="left:577.30px;top:1256.29px;font-size:28px;line-height:40px;font-weight:400;color:#000;font-family:'Liberation Sans', sans-serif;letter-spacing:0.242px;-webkit-text-stroke:0.5px #000;">Disable new inspections by default</div>
<div class="t" style="left:1213.00px;top:291.39px;font-size:28px;line-height:40px;font-weight:400;color:#000;font-family:'Liberation Sans', sans-serif;letter-spacing:-0.167px;-webkit-text-stroke:0.5px #000;">Reports</div>
<div class="b" style="left:1320px;top:294px;width:138px;height:32px;background:#ffd200;"></div>
<div class="t" style="left:1319.60px;top:291.39px;font-size:28px;line-height:40px;font-weight:400;color:#2e2e2e;font-family:'Liberation Sans', sans-serif;letter-spacing:0.244px;-webkit-text-stroke:0.5px #2e2e2e;">unresolved</div>
<div class="t" style="left:1464.70px;top:291.39px;font-size:28px;line-height:40px;font-weight:400;color:#000;font-family:'Liberation Sans', sans-serif;letter-spacing:-2.000px;-webkit-text-stroke:0.5px #000;">SQL</div>
<div class="b" style="left:1522px;top:294px;width:118px;height:32px;background:#ffd200;"></div>
<div class="t" style="left:1521.70px;top:291.39px;font-size:28px;line-height:40px;font-weight:400;color:#2e2e2e;font-family:'Liberation Sans', sans-serif;letter-spacing:0.162px;-webkit-text-stroke:0.5px #2e2e2e;">reference</div>
<div class="t" style="left:1640.00px;top:291.39px;font-size:28px;line-height:40px;font-weight:400;color:#000;font-family:'Liberation Sans', sans-serif;letter-spacing:0.700px;-webkit-text-stroke:0.5px #000;">s.</div>
<div class="t" style="left:1213.00px;top:361.09px;font-size:28px;line-height:40px;font-weight:400;color:#000;font-family:'Liberation Sans', sans-serif;letter-spacing:-0.667px;-webkit-text-stroke:0.5px #000;">Example (MySQL):</div>
<div class="b" style="left:1214px;top:408px;width:748px;height:194px;background:#fff;"></div>
<div class="b" style="left:1214px;top:408px;width:748px;height:194px;overflow:hidden;">
<div class="t" style="left:26.00px;top:25.79px;font-size:26px;line-height:40px;font-weight:400;color:#000;font-family:'Liberation Mono', monospace;letter-spacing:0.03px;">CREATE TABLE users(id INT, name VARCHAR(40));</div>
<div class="t" style="left:26.00px;top:62.29px;font-size:26px;line-height:40px;font-weight:400;color:#000;font-family:'Liberation Mono', monospace;letter-spacing:0.03px;">CREATE TABLE admins(id INT, col1 INT);</div>
<div class="t" style="left:26.00px;top:97.99px;font-size:26px;line-height:40px;font-weight:400;color:#000;font-family:'Liberation Mono', monospace;letter-spacing:0.03px;"></div>
<div class="t" style="left:26.00px;top:134.49px;font-size:26px;line-height:40px;font-weight:400;color:#000;font-family:'Liberation Mono', monospace;letter-spacing:0.03px;">SELECT users.id, admins.id FROM admins WHERE admins.id = 1;</div>
</div>
<div class="t" style="left:1213.40px;top:653.39px;font-size:28px;line-height:40px;font-weight:400;color:#000;font-family:'Liberation Sans', sans-serif;letter-spacing:-0.250px;-webkit-text-stroke:0.5px #000;">The</div>
<div class="t" style="left:1269.50px;top:654.26px;font-size:25.5px;line-height:40px;font-weight:400;color:#000;font-family:'Liberation Mono', monospace;letter-spacing:0.557px;">users.id</div>
<div class="t" style="left:1401.80px;top:653.39px;font-size:28px;line-height:40px;font-weight:400;color:#000;font-family:'Liberation Sans', sans-serif;letter-spacing:0.463px;-webkit-text-stroke:0.5px #000;">column is</div>
<div class="b" style="left:1532px;top:656px;width:138px;height:32px;background:#ffd200;"></div>
<div class="t" style="left:1532.00px;top:653.39px;font-size:28px;line-height:40px;font-weight:400;color:#2e2e2e;font-family:'Liberation Sans', sans-serif;letter-spacing:0.167px;-webkit-text-stroke:0.5px #2e2e2e;">unresolved</div>
<div class="t" style="left:1678.00px;top:653.39px;font-size:28px;line-height:40px;font-weight:400;color:#000;font-family:'Liberation Sans', sans-serif;letter-spacing:-0.150px;-webkit-text-stroke:0.5px #000;">because the</div>
<div class="t" style="left:1837.80px;top:654.26px;font-size:25.5px;line-height:40px;font-weight:400;color:#000;font-family:'Liberation Mono', monospace;letter-spacing:0.600px;">users</div>
<div class="t" style="left:1214.50px;top:687.09px;font-size:28px;line-height:40px;font-weight:400;color:#000;font-family:'Liberation Sans', sans-serif;letter-spacing:0.031px;-webkit-text-stroke:0.5px #000;">table is missing in the FROM clause.</div>
<div class="b" style="left:1214px;top:762px;width:748px;height:2px;background:#d4d4d4;"></div>
<div class="t" style="left:1213.30px;top:801.69px;font-size:28px;line-height:40px;font-weight:400;color:#000;font-family:'Liberation Sans', sans-serif;letter-spacing:-0.740px;-webkit-text-stroke:0.5px #000;">Scope:</div>
<div class="t" style="left:1443.50px;top:801.69px;font-size:28px;line-height:40px;font-weight:400;color:#000;font-family:'Liberation Sans', sans-serif;letter-spacing:-0.213px;-webkit-text-stroke:0.5px #000;">Severity:</div>
<div class="t" style="left:1662.90px;top:801.69px;font-size:28px;line-height:40px;font-weight:400;color:#000;font-family:'Liberation Sans', sans-serif;letter-spacing:0.864px;-webkit-text-stroke:0.5px #000;">Highlighting in editor:</div>
<div class="b" style="left:1216px;top:846px;width:206px;height:43px;box-sizing:border-box;border:2px solid #c3c3c3;border-radius:7px;background:linear-gradient(#ffffff,#fafafa);"></div>
<div class="t" style="left:1233.50px;top:849.10px;font-size:22.5px;line-height:40px;font-weight:400;color:#000;font-family:'Liberation Sans', sans-serif;letter-spacing:0.475px;-webkit-text-stroke:0.5px #000;">In All Scopes</div>
<svg class="b" style="left:1386px;top:864px;" width="18" height="10" viewBox="0 0 18 10"><path d="M0 0 L17 0 L8.5 9.5 Z" fill="#6e6e6e"/></svg>
<div class="b" style="left:1446px;top:846px;width:196px;height:43px;box-sizing:border-box;border:2px solid #c3c3c3;border-radius:7px;background:linear-gradient(#ffffff,#fafafa);"></div>
<svg class="b" style="left:1470px;top:858px;" width="20" height="20" viewBox="0 0 20 20"><circle cx="10" cy="10" r="10" fill="#db4c4c"/><rect x="8" y="3.5" width="4" height="7" fill="#fff"/><rect x="8" y="12.3" width="4" height="4" fill="#fff"/></svg>
<div class="t" style="left:1503.70px;top:849.10px;font-size:22.5px;line-height:40px;font-weight:400;color:#000;font-family:'Liberation Sans', sans-serif;letter-spacing:0.500px;-webkit-text-stroke:0.5px #000;">Error</div>
<svg class="b" style="left:1605px;top:864px;" width="18" height="10" viewBox="0 0 18 10"><path d="M0 0 L17 0 L8.5 9.5 Z" fill="#6e6e6e"/></svg>
<div class="b" style="left:1666px;top:846px;width:274px;height:43px;box-sizing:border-box;border:2px solid #c3c3c3;border-radius:7px;background:linear-gradient(#ffffff,#fafafa);"></div>
<div class="t" style="left:1683.30px;top:849.10px;font-size:22.5px;line-height:40px;font-weight:400;color:#000;font-family:'Liberation Sans', sans-serif;letter-spacing:0.500px;-webkit-text-stroke:0.5px #000;">Error</div>
<svg class="b" style="left:1903px;top:864px;" width="18" height="10" viewBox="0 0 18 10"><path d="M0 0 L17 0 L8.5 9.5 Z" fill="#6e6e6e"/></svg>
<div class="t" style="left:1214.00px;top:929.39px;font-size:28px;line-height:40px;font-weight:400;color:#000;font-family:'Liberation Sans', sans-serif;letter-spacing:0.250px;-webkit-text-stroke:0.5px #000;">Options</div>
<div class="b" style="left:1326px;top:948px;width:636px;height:2px;background:#d8d8d8;"></div>
<div class="b" style="left:1254px;top:990px;width:27px;height:27px;box-sizing:border-box;border:2px solid #b3b3b3;border-radius:5px;background:#fff;"></div>
<div class="b" style="left:1290px;top:980px;width:673px;height:50px;overflow:hidden;">
<div class="t" style="left:4.50px;top:4.89px;font-size:28px;line-height:40px;font-weight:400;color:#000;font-family:'Liberation Sans', sans-serif;-webkit-text-stroke:0.5px #000;">Suppress for</div>
<div class="t" style="left:643.00px;top:4.89px;font-size:28px;line-height:40px;font-weight:400;color:#000;font-family:'Liberation Sans', sans-serif;-webkit-text-stroke:0.5px #000;">ed</div>
</div>
<div class="b" style="left:1254px;top:1048px;width:27px;height:27px;box-sizing:border-box;border:2px solid #b3b3b3;border-radius:5px;background:#fff;"></div>
<div class="t" style="left:1294.50px;top:1043.19px;font-size:28px;line-height:40px;font-weight:400;color:#000;font-family:'Liberation Sans', sans-serif;-webkit-text-stroke:0.5px #000;">Suppress for</div>
<div class="b" style="left:1448px;top:892px;width:494px;height:402px;background:#fff;box-shadow:0 8px 24px rgba(0,0,0,0.22), 0 0 1.5px rgba(0,0,0,0.45);"></div>
<div class="t" style="left:1514.50px;top:898.79px;font-size:28px;line-height:40px;font-weight:400;color:#000;font-family:'Liberation Sans', sans-serif;letter-spacing:0.000px;-webkit-text-stroke:0.5px #000;">Error</div>
<div class="b" style="left:1448px;top:940px;width:494px;height:40px;background:#0073c7;"></div>
<div class="t" style="left:1515.50px;top:938.79px;font-size:28px;line-height:40px;font-weight:700;color:#fff;font-family:'Liberation Sans', sans-serif;letter-spacing:-1.167px;-webkit-text-stroke:0.0px #fff;">Warning</div>
<div class="t" style="left:1516.50px;top:978.79px;font-size:28px;line-height:40px;font-weight:400;color:#000;font-family:'Liberation Sans', sans-serif;letter-spacing:-0.300px;-webkit-text-stroke:0.5px #000;">Weak Warning</div>
<div class="t" style="left:1515.50px;top:1018.79px;font-size:28px;line-height:40px;font-weight:400;color:#000;font-family:'Liberation Sans', sans-serif;letter-spacing:-0.231px;-webkit-text-stroke:0.5px #000;">Server Problem</div>
<div class="t" style="left:1515.50px;top:1058.79px;font-size:28px;line-height:40px;font-weight:400;color:#000;font-family:'Liberation Sans', sans-serif;letter-spacing:-0.108px;-webkit-text-stroke:0.5px #000;">Grammar Error</div>
<div class="t" style="left:1515.50px;top:1098.79px;font-size:28px;line-height:40px;font-weight:400;color:#000;font-family:'Liberation Sans', sans-serif;letter-spacing:0.467px;-webkit-text-stroke:0.5px #000;">Typo</div>
<div class="t" style="left:1515.50px;top:1138.79px;font-size:28px;line-height:40px;font-weight:400;color:#000;font-family:'Liberation Sans', sans-serif;letter-spacing:0.292px;-webkit-text-stroke:0.5px #000;">Consideration</div>
<div class="t" style="left:1514.50px;top:1178.79px;font-size:28px;line-height:40px;font-weight:400;color:#000;font-family:'Liberation Sans', sans-serif;letter-spacing:0.547px;-webkit-text-stroke:0.5px #000;">No highlighting (fix available)</div>
<svg class="b" style="left:1478px;top:910px;" width="20" height="20" viewBox="0 0 20 20"><circle cx="10" cy="10" r="10" fill="#db4c4c"/><rect x="8" y="3.5" width="4" height="7" fill="#fff"/><rect x="8" y="12.3" width="4" height="4" fill="#fff"/></svg>
<svg class="b" style="left:1476px;top:948px;" width="24" height="22" viewBox="0 0 24 22"><path d="M12 0.5 L23.8 21.5 L0.2 21.5 Z" fill="#f0c800"/><rect x="10" y="7" width="4" height="7" fill="#fff"/><rect x="10" y="15.8" width="4" height="4" fill="#fff"/></svg>
<svg class="b" style="left:1476px;top:988px;" width="24" height="22" viewBox="0 0 24 22"><path d="M12 0.5 L23.8 21.5 L0.2 21.5 Z" fill="#d8cdab"/><rect x="10" y="7" width="4" height="7" fill="#fff"/><rect x="10" y="15.8" width="4" height="4" fill="#fff"/></svg>
<svg class="b" style="left:1476px;top:1028px;" width="24" height="22" viewBox="0 0 24 22"><path d="M12 0.5 L23.8 21.5 L0.2 21.5 Z" fill="#f0900a"/><rect x="10" y="7" width="4" height="7" fill="#fff"/><rect x="10" y="15.8" width="4" height="4" fill="#fff"/></svg>
<svg class="b" style="left:1476px;top:1068px;" width="26" height="28" viewBox="0 0 26 28"><path d="M2 10 L9 17 L20.5 5.5" fill="none" stroke="#3ba55d" stroke-width="5"/><path d="M1 25 L5.5 20.5 L10 25 L14.5 20.5 L19 25 L23 21" fill="none" stroke="#e8505b" stroke-width="2"/></svg>
<svg class="b" style="left:1476px;top:1108px;" width="26" height="28" viewBox="0 0 26 28"><path d="M2 10 L9 17 L20.5 5.5" fill="none" stroke="#3ba55d" stroke-width="5"/><path d="M1 25 L5.5 20.5 L10 25 L14.5 20.5 L19 25 L23 21" fill="none" stroke="#3ba55d" stroke-width="2"/></svg>
<div class="b" style="left:1454px;top:1232px;width:482px;height:2px;background:#dcdcdc;"></div>
<div class="t" style="left:1514.50px;top:1243.89px;font-size:28px;line-height:40px;font-weight:400;color:#000;font-family:'Liberation Sans', sans-serif;letter-spacing:-0.147px;-webkit-text-stroke:0.5px #000;">Edit Severities…</div>
<svg class="b" style="left:0px;top:0px;" width="1994" height="1424" viewBox="0 0 1994 1424"><path d="M1857.9 1083.8 L1730 976" stroke="#ff0008" stroke-width="5" stroke-linecap="round"/><path d="M1716.3 960.2 L1736.2 966.4 L1725.3 978.8 Z" fill="#ff0008"/></svg>
<div class="b" style="left:29px;top:1355px;width:46px;height:46px;box-sizing:border-box;border:2px solid #bdbdbd;border-radius:50%;background:#fff;"></div>
<div class="t" style="left:42.00px;top:1358.06px;font-size:33px;line-height:40px;font-weight:700;color:#767676;font-family:'Liberation Sans', sans-serif;-webkit-text-stroke:0.0px #767676;">?</div>
<div class="b" style="left:1484px;top:1354px;width:144px;height:47px;box-sizing:border-box;border:2px solid #c3c3c3;border-radius:7px;background:#fff;"></div>
<div class="t" style="left:1514.10px;top:1359.39px;font-size:28px;line-height:40px;font-weight:400;color:#000;font-family:'Liberation Sans', sans-serif;letter-spacing:-0.700px;-webkit-text-stroke:0.5px #000;">Cancel</div>
<div class="b" style="left:1652px;top:1354px;width:144px;height:47px;box-sizing:border-box;border:2px solid #d2d2d2;border-radius:7px;background:#f2f2f2;"></div>
<div class="t" style="left:1688.00px;top:1359.39px;font-size:28px;line-height:40px;font-weight:400;color:#8f8f8f;font-family:'Liberation Sans', sans-serif;letter-spacing:0.400px;-webkit-text-stroke:0.5px #8f8f8f;">Apply</div>
<div class="b" style="left:1820px;top:1354px;width:144px;height:47px;box-sizing:border-box;border:1px solid #2f73b9;border-radius:7px;background:linear-gradient(#3e8fd8,#3585d2);"></div>
<div class="t" style="left:1873.20px;top:1359.39px;font-size:28px;line-height:40px;font-weight:400;color:#fff;font-family:'Liberation Sans', sans-serif;letter-spacing:-2.400px;-webkit-text-stroke:0.5px #fff;">OK</div>
</div></div></body></html>
